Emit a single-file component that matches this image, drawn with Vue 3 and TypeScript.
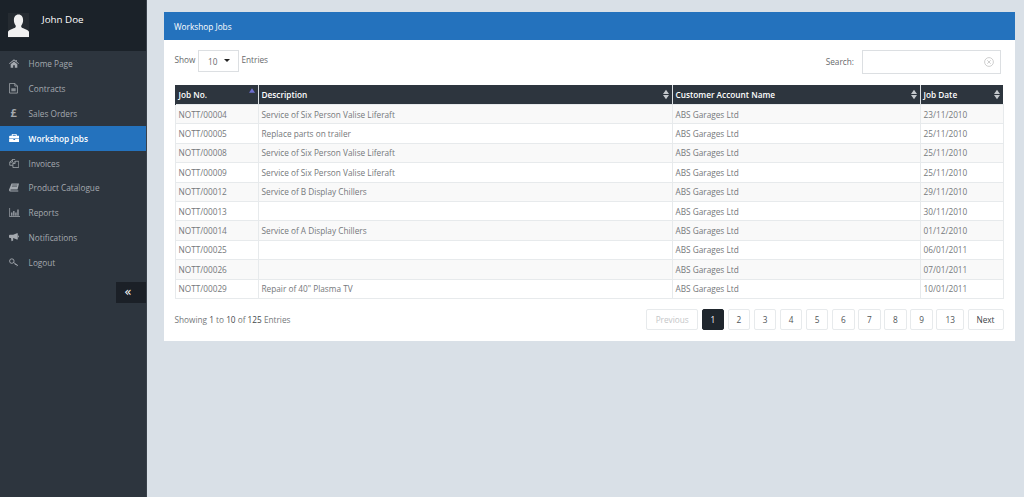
<script setup lang="ts">
interface Job { no: string; desc: string; date: string }
const jobs: Job[] = [
  { no: 'NOTT/00004', desc: 'Service of Six Person Valise Liferaft', date: '23/11/2010' },
  { no: 'NOTT/00005', desc: 'Replace parts on trailer', date: '25/11/2010' },
  { no: 'NOTT/00008', desc: 'Service of Six Person Valise Liferaft', date: '25/11/2010' },
  { no: 'NOTT/00009', desc: 'Service of Six Person Valise Liferaft', date: '25/11/2010' },
  { no: 'NOTT/00012', desc: 'Service of B Display Chillers', date: '29/11/2010' },
  { no: 'NOTT/00013', desc: '', date: '30/11/2010' },
  { no: 'NOTT/00014', desc: 'Service of A Display Chillers', date: '01/12/2010' },
  { no: 'NOTT/00025', desc: '', date: '06/01/2011' },
  { no: 'NOTT/00026', desc: '', date: '07/01/2011' },
  { no: 'NOTT/00029', desc: 'Repair of 40" Plasma TV', date: '10/01/2011' },
]
const menu = [
  { label: 'Home Page', icon: 'home' },
  { label: 'Contracts', icon: 'file' },
  { label: 'Sales Orders', icon: 'pound' },
  { label: 'Workshop Jobs', icon: 'case', active: true },
  { label: 'Invoices', icon: 'copy' },
  { label: 'Product Catalogue', icon: 'book' },
  { label: 'Reports', icon: 'chart' },
  { label: 'Notifications', icon: 'horn' },
  { label: 'Logout', icon: 'key' },
]
const pages = ['1', '2', '3', '4', '5', '6', '7', '8', '9', '13']
</script>

<template>
  <div class="app">
    <aside class="side">
      <div class="user">
        <svg class="avatar" viewBox="0 0 21 25" width="21" height="25">
          <rect width="21" height="25" fill="#252b31" />
          <path fill="#f1f1f1" d="M10.5 1.500c3 0 4.600 2.300 4.600 5.700 0 2.100-.7 3.800-1.600 5-.4.6-.4 1.700.2 2.300 1.400 1 6.300 2 7.300 4.200V24H0v-5.300c1-2.200 5.900-3.200 7.300-4.200.6-.6.6-1.700.2-2.300-.9-1.200-1.600-2.900-1.600-5 0-3.400 1.600-5.700 4.600-5.700z" />
        </svg>
        <span class="uname">John Doe</span>
      </div>
      <nav class="menu">
        <a v-for="m in menu" :key="m.label" class="item" :class="{ active: m.active }">
          <span class="ic">
            <svg v-if="m.icon === 'home'" viewBox="0 0 12 10" width="10" height="9" fill="currentColor"><path d="M6 0 8 1.700V.7h1.300v2.100L12 5l-.6.6L6 1.300.6 5.600 0 5zM2 5.900 6 2.600l4 3.300V10H7V7H5v3H2z" /></svg>
            <svg v-else-if="m.icon === 'file'" viewBox="0 0 10 12" width="9" height="10.500" fill="none" stroke="currentColor" stroke-width=".9"><path d="M.5.5h6l3 3v8h-9zM6.500.5v3h3" /><path d="M2.500 6h5v3.500h-5z" fill="currentColor" stroke="none" opacity=".75" /></svg>
            <span v-else-if="m.icon === 'pound'" class="pound">£</span>
            <svg v-else-if="m.icon === 'case'" viewBox="0 0 12 10" width="10.500" height="8.500" fill="currentColor"><path d="M4 0h4a1 1 0 0 1 1 1v1h2a1 1 0 0 1 1 1v2.300H0V3a1 1 0 0 1 1-1h2V1a1 1 0 0 1 1-1zm.2 1v1h3.600V1zM0 6h5v1h2V6h5v3a1 1 0 0 1-1 1H1a1 1 0 0 1-1-1z" /></svg>
            <svg v-else-if="m.icon === 'copy'" viewBox="0 0 11 10" width="10.500" height="9" fill="none" stroke="currentColor" stroke-width=".9"><path d="M6.500.5H3.500L.5 3.500v3.500h3.500M3.500.5v3H.5" /><path d="M10.500 2.500h-4L4 5v4.500h6.500zM6.500 2.500V5H4" /></svg>
            <svg v-else-if="m.icon === 'book'" viewBox="0 0 11 9" width="10" height="9" fill="currentColor"><path d="M2.800 0H11L9.400 6.600H2.300C1.300 6.600 1.100 7.700 2 7.900h8.200V9H1.700C.4 9-.2 7.900.1 6.800z" /><path d="M3.600 1.700h5.600M3.200 3.200h5.600" stroke="#2d353e" stroke-width=".6" /></svg>
            <svg v-else-if="m.icon === 'chart'" viewBox="0 0 12 10" width="11.500" height="9" fill="currentColor"><path d="M0 0h.8v9.200H12v.8H0zM2 5h1.400v3.500H2zM4.300 3.200h1.400v5.300H4.300zM6.600 5h1.400v3.500H6.600zM8.900 1.800h1.400v6.700H8.900z" /></svg>
            <svg v-else-if="m.icon === 'horn'" viewBox="0 0 12 10" width="10" height="9" fill="currentColor"><path d="M9.500 0h1v7.500h-1L5 5.500V8.500L3 9.500 2.400 5.500H1.500C.6 5.500 0 4.900 0 4V3c0-.8.600-1.300 1.500-1.300H5zM11 2.500a1.200 1.200 0 0 1 0 2.400z" /></svg>
            <svg v-else viewBox="0 0 12 10" width="10" height="9" fill="none" stroke="currentColor" stroke-width="1.100"><circle cx="3.400" cy="3.300" r="2.700" /><path d="M5.400 5 10.500 8.500M8 6.800 7.200 8M10 8.200 9.300 9.400" /></svg>
          </span>
          <span>{{ m.label }}</span>
        </a>
      </nav>
      <div class="collapse-row">
        <button class="collapse" type="button">«</button>
      </div>
    </aside>
    <main class="main">
      <section class="panel">
        <header class="phead">Workshop Jobs</header>
        <div class="pbody">
          <div class="controls">
            <div class="show">
              <span>Show</span>
              <span class="select">10<i class="caret"></i></span>
              <span>Entries</span>
            </div>
            <div class="search">
              <span>Search:</span>
              <span class="sbox">
                <svg viewBox="0 0 10 10" width="10" height="10" fill="none" stroke="#c9c9c9" stroke-width=".9"><circle cx="5" cy="5" r="4.400" /><path d="M3.300 3.300 6.700 6.700M6.700 3.300 3.300 6.700" /></svg>
              </span>
            </div>
          </div>
          <table class="tbl">
            <colgroup>
              <col class="c1" /><col class="c2" /><col class="c3" /><col class="c4" />
            </colgroup>
            <thead>
              <tr>
                <th>Job No.<svg class="sort" viewBox="0 0 7 5" width="6" height="5"><path d="M3.500 0 7 5H0z" fill="#6f6fd0" /></svg></th>
                <th v-for="h in ['Description', 'Customer Account Name', 'Job Date']" :key="h">
                  {{ h }}
                  <svg class="sort both" viewBox="0 0 7 11" width="6" height="11"><path d="M3.500 0 7 4.800H0zM3.500 11 0 6.200h7z" fill="#c4c8cc" /></svg>
                </th>
              </tr>
            </thead>
            <tbody>
              <tr v-for="j in jobs" :key="j.no">
                <td>{{ j.no }}</td>
                <td>{{ j.desc }}</td>
                <td>ABS Garages Ltd</td>
                <td>{{ j.date }}</td>
              </tr>
            </tbody>
          </table>
          <div class="foot">
            <div class="info">Showing <b>1</b> to <b>10</b> of <b>125</b> Entries</div>
            <div class="pager">
              <a class="pg disabled prev">Previous</a>
              <a v-for="(p, i) in pages" :key="p" class="pg" :class="{ cur: i === 0, wide: p === '13' }">{{ p }}</a>
              <a class="pg next">Next</a>
            </div>
          </div>
        </div>
      </section>
    </main>
  </div>
</template>

<style>
html, body { margin: 0; background: #d9e0e7; }
</style>

<style scoped>
.app {
  display: flex;
  min-height: 497px;
  font-family: "Open Sans", "Noto Sans", sans-serif;
  font-size: 8.25px;
  color: #676a6c;
}
.side {
  width: 146px;
  flex: none;
  background: #2d353e;
  border-right: 1px solid #3a424b;
}
.user {
  height: 51px;
  box-sizing: border-box;
  background: #1b2229;
  padding: 13px 8px 0;
  display: flex;
  align-items: flex-start;
  color: #fff;
}
.avatar { display: block; }
.uname {
  margin: 0 0 0 13px;
  font-size: 9.8px;
  line-height: 14px;
}
.menu { display: flex; flex-direction: column; }
.item {
  height: 24.9px;
  display: flex;
  align-items: center;
  color: #a4a9af;
}
.item.active { background: #2472bd; color: #fff; font-weight: 600; }
.ic { width: 28.6px; padding-left: 8.500px; box-sizing: border-box; display: flex; flex: none; align-items: center; }
.ic svg { display: block; }
.pound { font-size: 11px; font-weight: 700; line-height: 12px; padding-left: 2px; }
.collapse-row { display: flex; justify-content: flex-end; margin-top: 7px; }
.collapse {
  width: 30px;
  height: 21px;
  background: #1b2027;
  border: 0;
  padding: 0 6px 0 0;
  color: #fff;
  font-family: "DejaVu Sans", sans-serif;
  font-size: 12px;
  line-height: 19px;
}
.main { flex: 1; padding: 12px 10px 0 17px; }
.panel { background: #fff; }
.phead {
  height: 28px;
  line-height: 29px;
  background: #2472bd;
  color: #fff;
  padding-left: 10px;
  box-sizing: border-box;
}
.pbody { padding: 10px 11px 12px 10.5px; height: 301px; box-sizing: border-box; }
.controls { display: flex; justify-content: space-between; align-items: flex-start; height: 35px; }
.show { display: flex; align-items: flex-start; gap: 2px; line-height: 20px; }
.select {
  width: 41px;
  height: 22px;
  box-sizing: border-box;
  border: 1px solid #dcdfe2;
  margin: 0 .5px 0 .5px;
  padding-left: 9px;
  position: relative;
  line-height: 21px;
}
.caret {
  position: absolute;
  right: 8px;
  top: 8px;
  border-top: 3px solid #222;
  border-left: 3px solid transparent;
  border-right: 3px solid transparent;
}
.search { display: flex; gap: 7.5px; margin-right: 3px; line-height: 24px; align-items: flex-start; }
.sbox {
  width: 139px;
  height: 24px;
  box-sizing: border-box;
  border: 1px solid #dcdfe2;
  display: flex;
  align-items: center;
  justify-content: flex-end;
  padding-right: 6px;
}
.tbl {
  width: 828px;
  border-collapse: collapse;
  table-layout: fixed;
}
.c1 { width: 83px; }
.c2 { width: 414px; }
.c3 { width: 248px; }
.c4 { width: 83px; }
th {
  height: 19.5px;
  box-sizing: border-box;
  padding: 0 3px;
  background: #2d353e;
  color: #fff;
  font-weight: 600;
  text-align: left;
  position: relative;
  border-left: 1px solid #dde1e4;
}
th:first-child { border-left: 1px solid #2d353e; }
.sort { position: absolute; right: 3px; top: 4px; }
.sort:not(.both) { top: 3px; }
td {
  height: 19.4px;
  box-sizing: border-box;
  padding: 0 3px;
  border: 1px solid #e7eaec;
  color: #75787b;
  white-space: nowrap;
}
tbody tr:nth-child(odd) td { background: #f9f9f9; }
.foot { display: flex; justify-content: space-between; align-items: center; margin-top: 10.500px; }
.info { color: #75787b; }
.info b { font-weight: 400; color: #45484b; }
.pager { display: flex; gap: 3.6px; }
.pg {
  width: 22.5px;
  height: 21px;
  box-sizing: border-box;
  border: 1px solid #e7eaec;
  border-radius: 2px;
  display: flex;
  align-items: center;
  justify-content: center;
  color: #505458;
  background: #fff;
}
.pg.cur { background: #1f262d; color: #fff; border-color: #1f262d; }
.pg.wide { width: 27.5px; }
.prev { width: 51.5px; color: #c4c6c8; }
.next { width: 36px; color: #404448; }
</style>
